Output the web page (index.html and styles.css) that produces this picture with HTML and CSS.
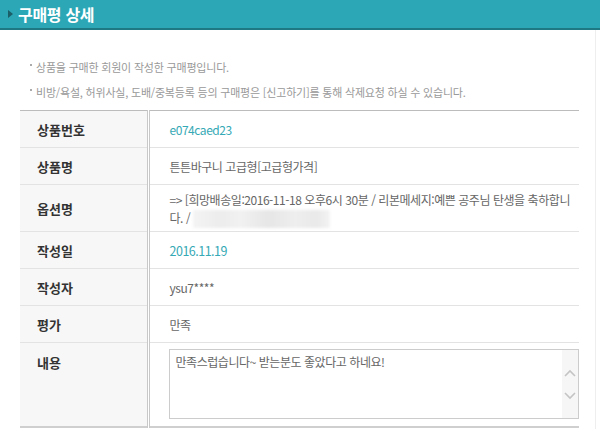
FILE: index.html
```html
<!DOCTYPE html>
<html lang="ko">
<head>
<meta charset="utf-8">
<title>구매평 상세</title>
<link rel="stylesheet" href="styles.css">
</head>
<body>
<div class="page">
  <h1 class="title"><span class="arrow"></span>구매평 상세</h1>
  <div class="content">
    <ul class="notes">
      <li>상품을 구매한 회원이 작성한 구매평입니다.</li>
      <li>비방/욕설, 허위사실, 도배/중복등록 등의 구매평은 [신고하기]를 통해 삭제요청 하실 수 있습니다.</li>
    </ul>
    <table class="detail">
      <tr class="r37">
        <th>상품번호</th>
        <td class="teal">e074caed23</td>
      </tr>
      <tr class="r37">
        <th>상품명</th>
        <td>튼튼바구니 고급형[고급형가격]</td>
      </tr>
      <tr class="r47">
        <th>옵션명</th>
        <td class="multi">=&gt; [희망배송일:2016-11-18 오후6시 30분 / 리본메세지:예쁜 공주님 탄생을 축하합니다. / <span class="blur"></span></td>
      </tr>
      <tr class="r37">
        <th>작성일</th>
        <td class="teal date">2016.11.19</td>
      </tr>
      <tr class="r37">
        <th>작성자</th>
        <td>ysu7****</td>
      </tr>
      <tr class="r37">
        <th>평가</th>
        <td>만족</td>
      </tr>
      <tr class="last">
        <th>내용</th>
        <td>
          <div class="textbox">
            <div class="textbody">만족스럽습니다~ 받는분도 좋았다고 하네요!</div>
            <div class="vscroll">
              <svg width="12" height="8" viewBox="0 0 12 8"><path d="M1 7 L6 2 L11 7" fill="none" stroke="#c4c4c4" stroke-width="1.6"/></svg>
              <svg width="12" height="8" viewBox="0 0 12 8"><path d="M1 1 L6 6 L11 1" fill="none" stroke="#c4c4c4" stroke-width="1.6"/></svg>
            </div>
          </div>
        </td>
      </tr>
    </table>
  </div>
</div>
</body>
</html>
```

FILE: styles.css
```css
* { box-sizing: border-box; }
html, body { margin: 0; padding: 0; background: #fff; }
body {
  font-family: "Noto Sans CJK KR", "Noto Sans", sans-serif;
  font-size: 12px;
  color: #666;
}
.page { width: 600px; height: 429px; overflow: hidden; }
.title {
  margin: 0;
  height: 30px;
  background: #2ba7b6;
  border-bottom: 2px solid #1e7883;
  color: #fff;
  font-size: 16px;
  font-weight: bold;
  line-height: 28px;
  padding-left: 18px;
  position: relative;
  letter-spacing: -0.3px;
}
.arrow {
  position: absolute;
  left: 8px;
  top: 10px;
  width: 0; height: 0;
  border-left: 5px solid #1b5f69;
  border-top: 4px solid transparent;
  border-bottom: 4px solid transparent;
}
.content {
  width: 596px;
  border-right: 1px solid #eeeeee;
  padding: 0 16px 0 20px;
  height: 399px;
}
.notes {
  list-style: none;
  margin: 0;
  padding: 28px 0 0 10px;
  height: 80px;
  font-size: 11px;
  color: #999;
  letter-spacing: -0.2px;
}
.notes li { height: 25px; line-height: 18px; position: relative; padding-left: 6px; }
.notes li::before {
  content: "";
  position: absolute;
  left: 0; top: 6px;
  width: 2px; height: 2px;
  background: #aaa;
}
.detail {
  width: 559px;
  border-collapse: collapse;
  border-top: 1px solid #bcbcbc;
  border-bottom: 2px solid #cfcfcf;
}
.detail th {
  width: 128px;
  background: #f7f7f7;
  border-right: 3px double #c8c8c8;
  border-bottom: 1px solid #e3e3e3;
  text-align: left;
  padding: 0 0 0 17px;
  font-size: 13px;
  font-weight: bold;
  color: #333;
  vertical-align: middle;
}
.detail td {
  border-bottom: 1px solid #e3e3e3;
  padding: 0 2px 0 20px;
  color: #666;
  vertical-align: middle;
  letter-spacing: -0.45px;
}
.r37 { height: 37px; }
.r47 { height: 47px; }
.teal { color: #35a9b5 !important; }
.date { letter-spacing: -0.5px !important; font-size: 12.5px; }
.multi { line-height: 18px; padding-top: 2px !important; }
.blur {
  display: inline-block;
  width: 137px;
  height: 18px;
  vertical-align: -5px;
  background: linear-gradient(90deg, #f4f4f4 0, #ececec 20%, #f1f1f1 35%, #e6e6e6 55%, #eeeeee 75%, #e9e9e9 90%, #f3f3f3 100%);
  filter: blur(1.5px);
}
.detail tr.last th { vertical-align: top; padding-top: 10px; height: 84px; }
.detail tr.last td { vertical-align: top; padding: 6px 0 7px 19px; border-bottom: none; }
.textbox {
  display: flex;
  height: 70px;
  border: 1px solid #cccccc;
  background: #fff;
}
.textbody {
  flex: 1;
  padding: 3px 6px;
  line-height: 18px;
  color: #666;
}
.vscroll {
  width: 16px;
  background: #f6f6f6;
  display: flex;
  flex-direction: column;
  align-items: center;
  justify-content: center;
  gap: 15px;
}
.vscroll svg { display: block; }
```
